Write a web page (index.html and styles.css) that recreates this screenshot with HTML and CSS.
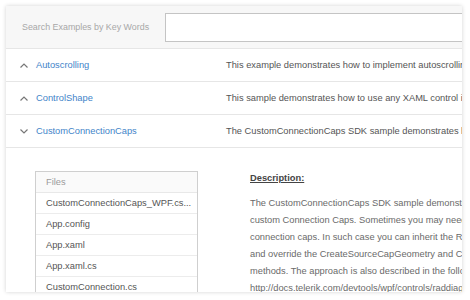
FILE: index.html
```html
<!DOCTYPE html>
<html>
<head>
<meta charset="utf-8">
<link rel="stylesheet" href="styles.css">
</head>
<body>
<div class="card">
  <div class="search">
    <span class="search-label">Search Examples by Key Words</span>
    <div class="search-input"></div>
  </div>
  <div class="row">
    <span class="chev"><svg width="8" height="5" viewBox="0 0 8 5"><polyline points="0.5,4.5 4,1 7.5,4.5" fill="none" stroke="#777" stroke-width="1.2"/></svg></span>
    <a class="name">Autoscrolling</a>
    <span class="desc">This example demonstrates how to implement autoscrolling functionality in RadDiagram.</span>
  </div>
  <div class="row">
    <span class="chev"><svg width="8" height="5" viewBox="0 0 8 5"><polyline points="0.5,4.5 4,1 7.5,4.5" fill="none" stroke="#777" stroke-width="1.2"/></svg></span>
    <a class="name">ControlShape</a>
    <span class="desc">This sample demonstrates how to use any XAML control in a RadDiagramShape.</span>
  </div>
  <div class="row">
    <span class="chev"><svg width="8" height="5" viewBox="0 0 8 5"><polyline points="0.5,0.5 4,4 7.5,0.5" fill="none" stroke="#777" stroke-width="1.2"/></svg></span>
    <a class="name">CustomConnectionCaps</a>
    <span class="desc">The CustomConnectionCaps SDK sample demonstrates how to create custom connection caps.</span>
  </div>
  <div class="details">
    <div class="files">
      <div class="files-head">Files</div>
      <div class="file">CustomConnectionCaps_WPF.cs...</div>
      <div class="file">App.config</div>
      <div class="file">App.xaml</div>
      <div class="file">App.xaml.cs</div>
      <div class="file">CustomConnection.cs</div>
      <div class="file">MainWindow.xaml</div>
    </div>
    <div class="about">
      <div class="about-title">Description:</div>
      <p class="about-text">The CustomConnectionCaps SDK sample demonstrates how to create<br>custom Connection Caps. Sometimes you may need to create your own<br>connection caps. In such case you can inherit the RadDiagramConnection class<br>and override the CreateSourceCapGeometry and CreateTargetCapGeometry<br>methods. The approach is also described in the following help article:<br>http://docs.telerik.com/devtools/wpf/controls/raddiagram/howto/customize-<br>connection-caps</p>
    </div>
  </div>
</div>
</body>
</html>
```
FILE: styles.css
```css
html, body {
  margin: 0;
  padding: 0;
  background: #ffffff;
}
body {
  padding: 6px;
  font-family: "Liberation Sans", Arial, sans-serif;
}
.card {
  width: 456px;
  height: 286px;
  overflow: hidden;
  background: #ffffff;
  box-shadow: 0 0 4px rgba(0, 0, 0, 0.18);
}
.search {
  height: 42px;
  background: #f7f7f7;
  border-bottom: 1px solid #e6e6e6;
  display: flex;
  align-items: center;
  padding-left: 16px;
}
.search-label {
  font-size: 8.9px;
  color: #a8a8a8;
  width: 143px;
  flex: none;
  white-space: nowrap;
}
.search-input {
  flex: none;
  width: 320px;
  height: 27px;
  background: #ffffff;
  border: 1px solid #c4c4c4;
  margin-top: 1px;
}
.row {
  height: 32px;
  border-bottom: 1px solid #e6e6e6;
  display: flex;
  align-items: center;
  white-space: nowrap;
  font-size: 9.3px;
}
.chev {
  flex: none;
  width: 8px;
  margin-left: 14px;
  display: flex;
  align-items: center;
}
.name {
  flex: none;
  width: 190px;
  margin-left: 8px;
  color: #3f84c9;
}
.desc {
  color: #555555;
}
.details {
  display: flex;
  padding: 23px 0 0 29px;
  white-space: nowrap;
}
.files {
  flex: none;
  width: 161px;
  border: 1px solid #cfcfcf;
  font-size: 9.3px;
  color: #555555;
}
.files-head {
  height: 20px;
  line-height: 20px;
  padding-left: 10px;
  color: #9a9a9a;
  background: #fafafa;
  border-bottom: 1px solid #e8e8e8;
}
.file {
  height: 20px;
  line-height: 20px;
  padding-left: 10px;
  border-bottom: 1px solid #ececec;
  overflow: hidden;
  text-overflow: ellipsis;
}
.about {
  margin-left: 52px;
  font-size: 9.3px;
}
.about-title {
  font-weight: bold;
  text-decoration: underline;
  color: #444444;
  margin-top: 2px;
}
.about-text {
  margin: 12px 0 0;
  line-height: 17px;
  color: #6a6a6a;
}
```
